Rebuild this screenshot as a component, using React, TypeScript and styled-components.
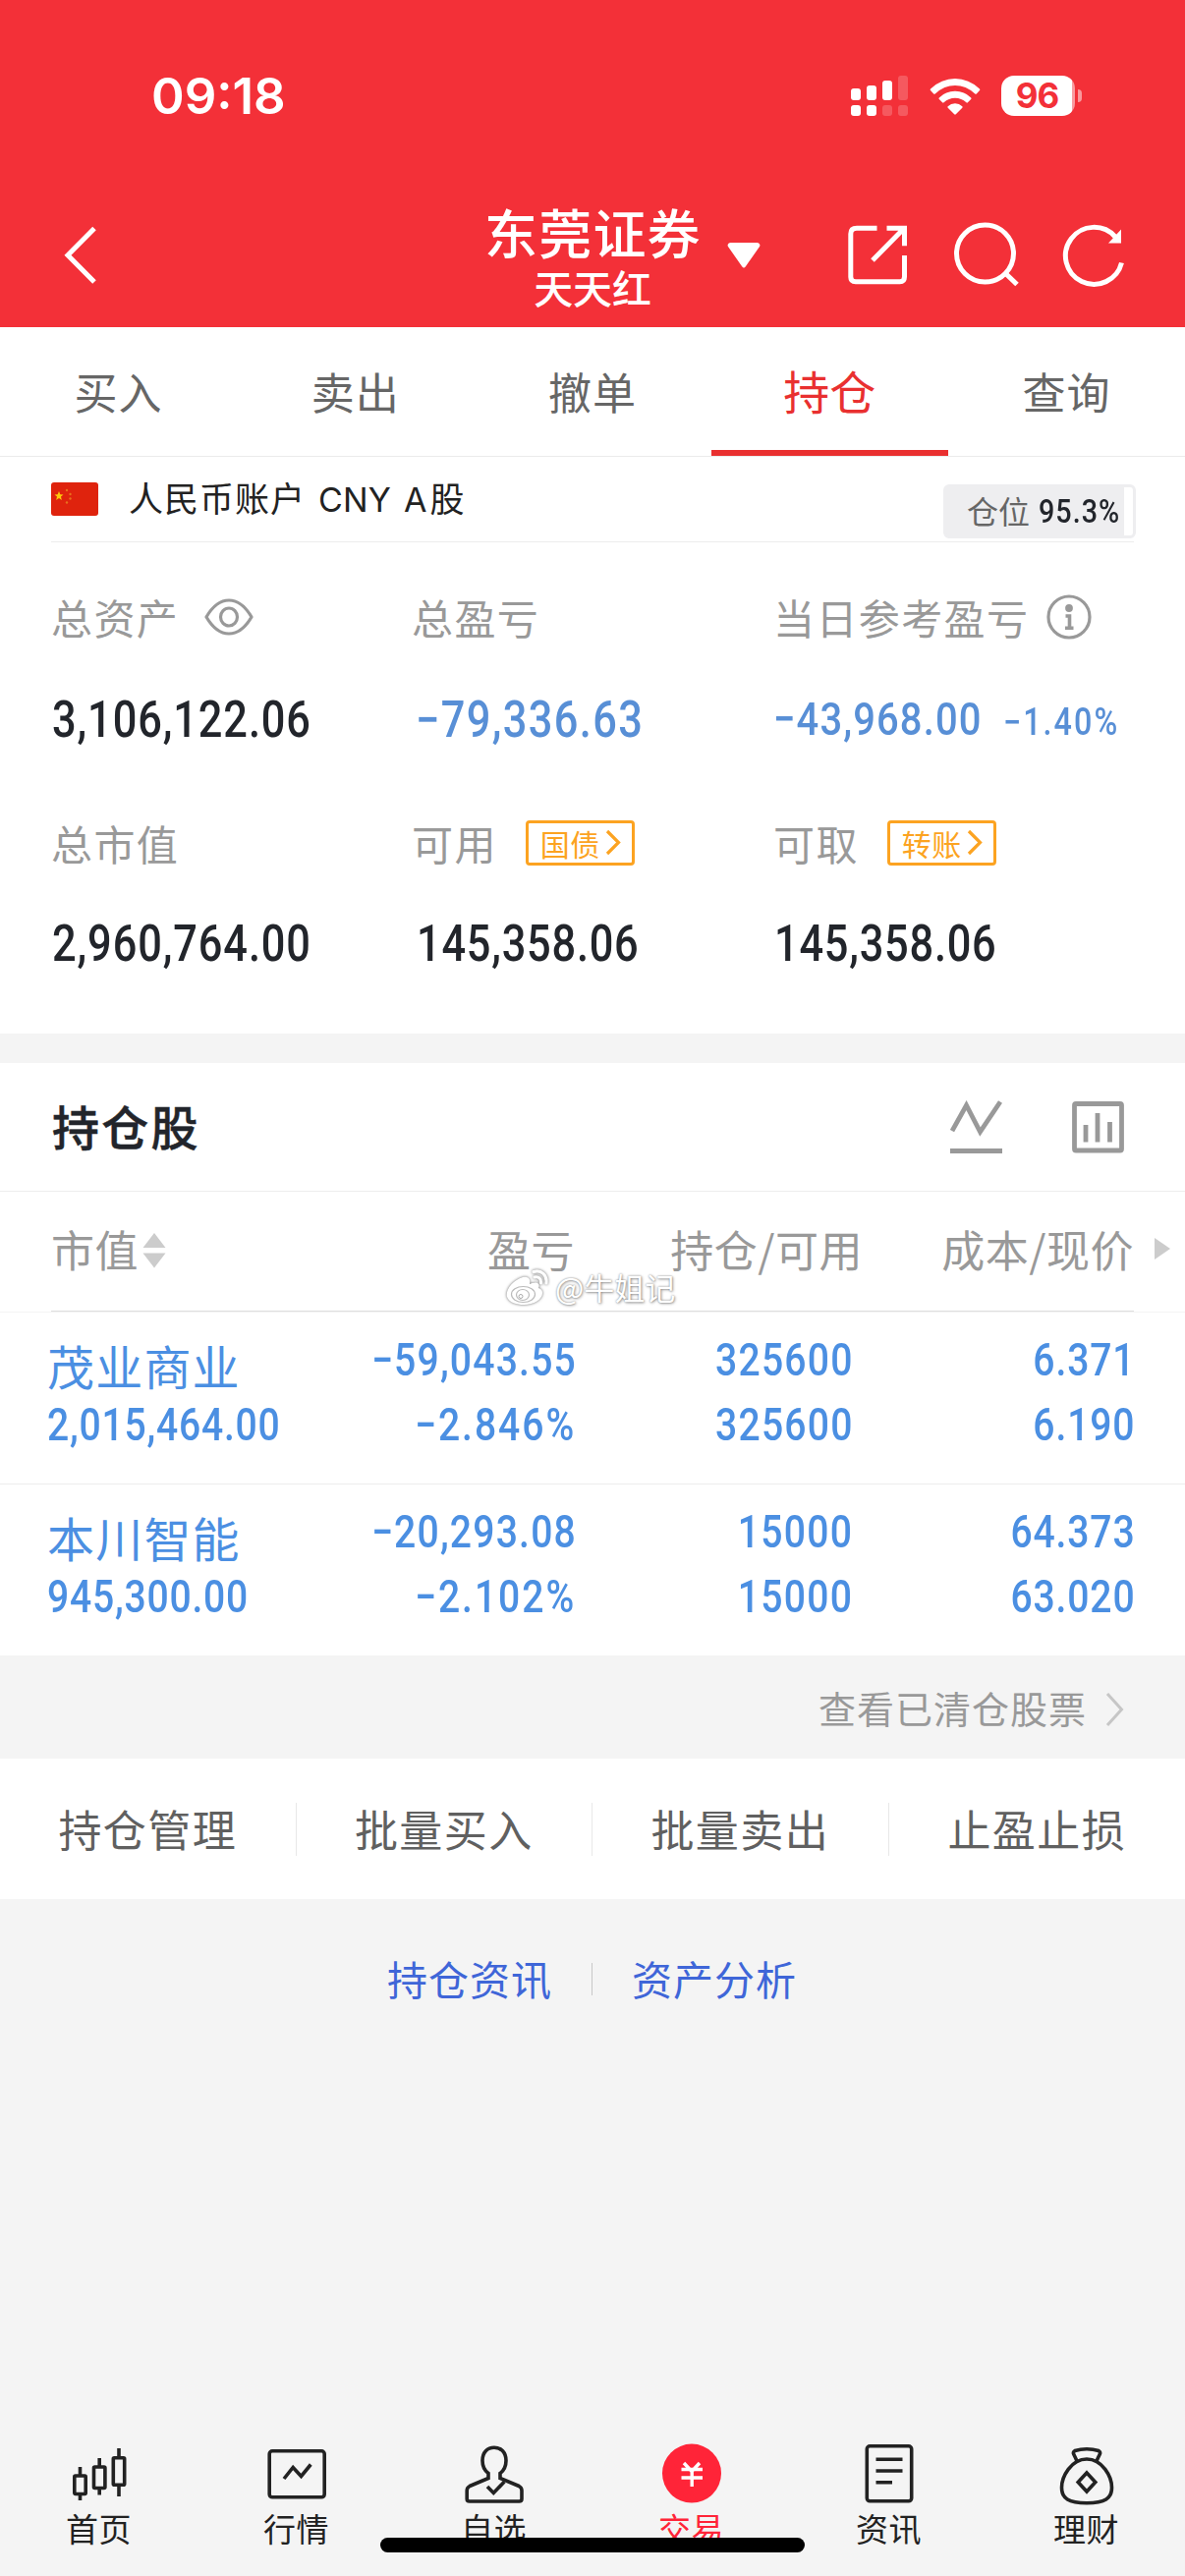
import React from "react";
import styled, { createGlobalStyle } from "styled-components";

const cjk = `"Noto Sans CJK SC", "Noto Sans", sans-serif`;
const blue = "#4b8fe2";

const GlobalStyle = createGlobalStyle`
  * { box-sizing: border-box; }
  body { margin: 0; background: #f4f4f4; font-family: ${cjk}; }
  svg { display: block; flex: none; }
`;

const Screen = styled.div`
  position: relative;
  width: 1206px;
  height: 2622px;
  display: flex;
  flex-direction: column;
  background: #f4f4f4;
  overflow: hidden;
`;

/* ---------- header ---------- */
const Header = styled.header`
  height: 333px;
  flex: none;
  background: #f33038;
  color: #fff;
`;
const StatusBar = styled.div`
  display: flex;
  height: 208px;
  padding: 68px 105px 0 154px;
  align-items: flex-start;
  justify-content: space-between;
`;
const Clock = styled.span`
  font: 600 51px/60px Inter, sans-serif;
  letter-spacing: 0;
`;
const StatusIcons = styled.div`
  display: flex;
  align-items: center;
  height: 41px;
  margin-top: 9px;
`;
const Battery = styled.div`
  width: 75px;
  height: 41px;
  margin-left: 21px;
  border-radius: 13px;
  background: linear-gradient(90deg, #fff 72px, #f99ba0 72px);
  color: #f33038;
  font: 700 35px/41px Inter, sans-serif;
  letter-spacing: -1px;
  padding-right: 2px;
  text-align: center;
`;
const BatteryNub = styled.div`
  width: 4px;
  height: 13px;
  margin-left: 3px;
  border-radius: 0 4px 4px 0;
  background: #f9989c;
`;
const NavBar = styled.div`
  display: grid;
  grid-template-columns: 493px 220px 493px;
  height: 125px;
`;
const NavLeft = styled.div`
  padding: 22px 0 0 64px;
`;
const NavTitle = styled.div`
  text-align: center;
  white-space: nowrap;
  margin-top: -2px;
`;
const Title = styled.div`
  font-size: 54px;
  font-weight: 500;
  line-height: 60px;
  letter-spacing: 1.2px;
`;
const Subtitle = styled.div`
  font-size: 40px;
  line-height: 44px;
  margin-top: 4px;
  font-weight: 500;
  letter-spacing: -0.2px;
`;
const NavRight = styled.div`
  display: flex;
  align-items: flex-start;
  padding: 16px 37px 0 27px;
`;
const Caret = styled.div`
  padding-top: 22px;
  margin-right: auto;
`;
const NavButton = styled.div`
  width: 110.3px;
  display: flex;
  justify-content: center;
`;

/* ---------- tabs ---------- */
const Tabs = styled.nav`
  display: grid;
  grid-template-columns: repeat(5, 1fr);
  height: 132px;
  flex: none;
  background: #fff;
  border-bottom: 1px solid #ebebeb;
`;
const Tab = styled.div<{ $active?: boolean }>`
  padding-top: ${(p) => (p.$active ? 33 : 34)}px;
  text-align: center;
  font-size: ${(p) => (p.$active ? 47 : 44)}px;
  line-height: 62px;
  letter-spacing: ${(p) => (p.$active ? 0 : 1)}px;
  color: ${(p) => (p.$active ? "#e93030" : "#666")};
  border-bottom: 6px solid ${(p) => (p.$active ? "#e93030" : "transparent")};
`;

/* ---------- numbers ---------- */
const Num = styled.span<{ $size: number; $weight?: number; $right?: boolean; $color?: string; $sx?: number; $ls?: number }>`
  display: inline-block;
  font-family: Roboto, sans-serif;
  font-size: ${(p) => p.$size}px;
  font-weight: ${(p) => p.$weight ?? 500};
  line-height: 60px;
  letter-spacing: ${(p) => p.$ls ?? 1.05}px;
  color: ${(p) => p.$color ?? "#22252b"};
  white-space: nowrap;
  transform: scaleX(${(p) => p.$sx ?? 0.85});
  transform-origin: ${(p) => (p.$right ? "right" : "left")} center;
`;

/* ---------- account ---------- */
const Panel = styled.section`
  background: #fff;
  flex: none;
`;
const AccountRow = styled.div`
  display: flex;
  height: 87px;
  margin: 0 52px;
  border-bottom: 1px solid #ededed;
`;
const AccountName = styled.div`
  margin: 15px auto 0 31px;
  font-size: 35px;
  line-height: 52px;
  letter-spacing: 1px;
  color: #222;
  white-space: nowrap;
`;
const Latin = styled.span`
  font-family: Inter, sans-serif;
  font-size: 34px;
  letter-spacing: 0.2px;
  margin: 0 3px 0 13px;
  word-spacing: 3px;
`;
const FlagBox = styled.div`
  padding-top: 26px;
`;
const PositionBadge = styled.div`
  display: flex;
  width: 196px;
  height: 55px;
  margin: 28px -2px 0 0;
  border-radius: 6px;
  border: 3px solid #eeeef0;
  background: linear-gradient(90deg, #eeeef0 181px, #fff 181px);
  padding-left: 21px;
  font-size: 32px;
  line-height: 46px;
  color: #666;
  white-space: nowrap;
`;
const BadgeNum = styled.span`
  margin-left: 9px;
  height: 50px;
  margin-top: -5px;
`;
const Summary = styled.div`
  display: grid;
  grid-template-columns: 367px 368px 1fr;
  grid-template-rows: 230px 270px;
  padding-left: 52px;
  height: 500px;
`;
const Cell = styled.div`
  padding-top: 44px;
`;
const CellLabel = styled.div`
  display: flex;
  align-items: center;
  height: 62px;
  font-size: 42px;
  letter-spacing: 1.4px;
  color: #999;
`;
const LabelIcon = styled.span<{ $gap: number }>`
  margin-left: ${(p) => p.$gap}px;
  padding-top: 2px;
`;
const CellValue = styled.div<{ $top?: number; $left?: number }>`
  display: flex;
  margin-top: ${(p) => p.$top ?? 45}px;
  margin-left: ${(p) => p.$left ?? 1}px;
  height: 60px;
`;
const Link = styled.span`
  display: flex;
  align-items: center;
  width: 111px;
  height: 46px;
  margin: 1px 0 0 29px;
  padding-left: 12px;
  gap: 5px;
  border: 3px solid #fca321;
  border-radius: 4px;
  color: #fca321;
  font-size: 30px;
  line-height: 36px;
  letter-spacing: 0.5px;
`;
const PercentSlot = styled.span`
  margin-left: -16px;
  padding-top: 3px;
`;

/* ---------- holdings ---------- */
const Holdings = styled.section`
  margin-top: 30px;
  background: #fff;
  flex: none;
`;
const HoldHead = styled.div`
  display: flex;
  align-items: center;
  height: 131px;
  padding: 0 62px 0 53px;
  border-bottom: 1px solid #ededed;
`;
const HoldTitle = styled.h2`
  margin: -4px 0 0;
  font-size: 48px;
  letter-spacing: 2.2px;
  font-weight: 500;
  color: #22252b;
  -webkit-text-stroke: 0.5px #22252b;
`;
const HeadIcons = styled.div`
  display: flex;
  gap: 71px;
  margin-left: auto;
`;
const columns = "297px 236px 282px 287px";
const ColumnHead = styled.div`
  position: relative;
  display: grid;
  grid-template-columns: ${columns};
  align-items: center;
  height: 123px;
  padding: 0 52px 6px;
  border-bottom: 1px solid #f4f4f4;
  background: linear-gradient(#dedede, #dedede) 52px 100% / 1102px 1px no-repeat;
  font-size: 44px;
  letter-spacing: 0.5px;
  color: #999;
`;
const Column = styled.div<{ $right?: boolean; $pull?: number }>`
  display: flex;
  align-items: center;
  white-space: nowrap;
  justify-content: ${(p) => (p.$right ? "flex-end" : "flex-start")};
  margin-right: ${(p) => -(p.$pull ?? 0)}px;
`;
const SortIcon = styled.span`
  margin-left: 4px;
  padding-top: 3px;
`;
const MoreArrow = styled.span`
  position: absolute;
  right: 15px;
  top: 46px;
`;
const StockRow = styled.div`
  display: grid;
  grid-template-columns: ${columns};
  height: 175px;
  padding: 0 52px;
  border-bottom: 1px solid #ededed;
  &:last-child { border-bottom: 0; height: 174px; }
`;
const StockCell = styled.div<{ $right?: boolean }>`
  display: flex;
  flex-direction: column;
  align-items: ${(p) => (p.$right ? "flex-end" : "flex-start")};
  padding-top: 18px;
  gap: 6px;
  margin: ${(p) => (p.$right ? "0 -1.5px 0 0" : "0 0 0 -4px")};
`;
const StockName = styled.div`
  height: 60px;
  font-size: 48px;
  line-height: 70px;
  letter-spacing: 1.2px;
  white-space: nowrap;
  color: ${blue};
`;
const Watermark = styled.div`
  position: absolute;
  left: 515px;
  top: 1288px;
  display: flex;
  align-items: center;
  gap: 6px;
  color: #fff;
  font-size: 31px;
  line-height: 44px;
  text-shadow: 0 0 2px rgba(0, 0, 0, 0.45), 1px 1px 3px rgba(0, 0, 0, 0.35);
  svg { filter: drop-shadow(0 0 1.5px rgba(0, 0, 0, 0.6)); }
`;

/* ---------- below the table ---------- */
const Cleared = styled.div`
  display: flex;
  align-items: center;
  justify-content: flex-end;
  height: 105px;
  padding: 0 62px 0 0;
  gap: 19px;
  flex: none;
  font-size: 38px;
  letter-spacing: 1px;
  color: #999;
  svg { margin-top: 4px; }
`;
const Actions = styled.div`
  display: grid;
  grid-template-columns: repeat(4, 1fr);
  align-items: center;
  height: 143px;
  flex: none;
  background: #fff;
`;
const Action = styled.div`
  height: 54px;
  border-right: 1px solid #e8e8e8;
  text-align: center;
  font-size: 44px;
  line-height: 52px;
  letter-spacing: 1.4px;
  color: #606060;
  &:last-child { border-right: 0; }
`;
const Links = styled.div`
  display: grid;
  grid-template-columns: 1fr 1fr;
  flex: 1;
  align-items: start;
  padding-top: 65px;
`;
const TextLink = styled.a<{ $first?: boolean }>`
  height: 33px;
  padding: 0 40px;
  text-align: ${(p) => (p.$first ? "right" : "left")};
  border-right: ${(p) => (p.$first ? "1px solid #c8c8c8" : "0")};
  font-size: 41px;
  line-height: 31px;
  letter-spacing: 1px;
  color: #3f66d8;
`;

/* ---------- bottom bar ---------- */
const BottomBar = styled.nav`
  display: grid;
  grid-template-columns: repeat(6, 1fr);
  height: 142px;
  flex: none;
`;
const BottomItem = styled.div<{ $active?: boolean }>`
  display: flex;
  flex-direction: column;
  align-items: center;
  font-size: 33px;
  line-height: 44px;
  letter-spacing: 0.4px;
  color: ${(p) => (p.$active ? "#ff2438" : "#222")};
`;
const ItemIcon = styled.div`
  height: 69px;
  margin-bottom: 2px;
`;
const HomeIndicator = styled.div`
  position: absolute;
  left: 387px;
  top: 2583px;
  width: 432px;
  height: 15px;
  border-radius: 8px;
  background: #000;
`;

/* ---------- drawings ---------- */
const Signal = () => (
  <svg width="58" height="41" viewBox="0 0 58 41" fill="#fff">
    <rect x="0" y="13" width="10" height="12" rx="3" />
    <rect x="16" y="10" width="10" height="15" rx="3" />
    <rect x="32" y="5" width="10" height="20" rx="3" />
    <rect x="48" y="0" width="10" height="25" rx="3" opacity=".2" />
    <rect x="0" y="30" width="10" height="11" rx="3" />
    <rect x="16" y="30" width="10" height="11" rx="3" />
    <rect x="32" y="30" width="10" height="11" rx="3" opacity=".2" />
    <rect x="48" y="30" width="10" height="11" rx="3" opacity=".2" />
  </svg>
);
const WifiBox = styled.svg`
  margin-left: 22px;
`;
const Wifi = () => (
  <WifiBox width="52" height="38" viewBox="0 0 52 38" fill="#fff">
    <path d="M1 11.5Q12 1 26 1t25 10.500q.8.8 0 1.600l-3.200 3.300q-.7.700-1.500 0Q37 8 26 8T5.700 16.400q-.8.700-1.500 0L1 13.100q-.8-.8 0-1.600z" />
    <path d="M9.800 20.400Q16.500 13.800 26 13.800t16.200 6.600q.8.800 0 1.600l-3.300 3.300q-.8.700-1.500 0Q32.500 20.700 26 20.700t-11.400 4.600q-.7.700-1.500 0L9.800 22q-.8-.8 0-1.600z" />
    <path d="M18.700 29.200Q21.800 26.300 26 26.300t7.300 2.900q.8.800 0 1.600l-6.500 6.500q-.8.700-1.600 0l-6.500-6.500q-.8-.8 0-1.600z" />
  </WifiBox>
);
const BackIcon = () => (
  <svg width="38" height="60" viewBox="0 0 38 60" fill="none" stroke="#fff" strokeWidth="5">
    <path d="M32 2.500 5 29.700 32 57" />
  </svg>
);
const CaretIcon = () => (
  <svg width="34" height="28" viewBox="0 0 34 28" fill="#fff">
    <path d="M3 1h28q3.500 1 2 4L19 25q-2 3-4 0L1 5q-1.500-3 2-4z" />
  </svg>
);
const ShareIcon = () => (
  <svg width="70" height="70" viewBox="0 0 70 70" fill="none" stroke="#fff" strokeWidth="5">
    <path d="M34.500 8.300H14Q7.800 8.300 7.800 14v44q0 4.700 5 4.700h45q4.700 0 4.700-5V36" />
    <path d="M44.500 8.300h18v18M62 8.500 30 41" />
  </svg>
);
const SearchIcon = () => (
  <svg width="70" height="70" viewBox="0 0 70 70" fill="none" stroke="#fff" strokeWidth="5">
    <circle cx="33.500" cy="34" r="29" />
    <path d="M54 54 66 65.500" />
  </svg>
);
const RefreshIcon = () => (
  <svg width="70" height="70" viewBox="0 0 70 70" fill="none" stroke="#fff" strokeWidth="5">
    <path d="M62.500 43.500A29 29 0 1 1 56 17" />
    <path d="M62 9.500v14H49z" fill="#fff" stroke="none" />
  </svg>
);
const Flag = () => (
  <svg width="48" height="34" viewBox="0 0 48 34">
    <rect width="48" height="34" rx="3" fill="#df230d" />
    <path d="m8 9 1.300 3.200 3.200.2-2.500 2.200.8 3.300L8 16.100 5.200 17.900l.8-3.300-2.500-2.200 3.200-.2z" fill="#fdc80b" />
    <g fill="#e8701d">
      <circle cx="16" cy="8" r="1.200" />
      <circle cx="19.500" cy="12" r="1.200" />
      <circle cx="19.500" cy="16.500" r="1.200" />
      <circle cx="16" cy="20.500" r="1.200" />
    </g>
  </svg>
);
const EyeIcon = () => (
  <svg width="50" height="38" viewBox="0 0 50 38" fill="none" stroke="#999" strokeWidth="3.200">
    <path d="M2 19Q12 2 25 2t23 17Q38 36 25 36T2 19z" strokeLinejoin="round" />
    <ellipse cx="25" cy="19" rx="8.500" ry="9" />
  </svg>
);
const InfoIcon = () => (
  <svg width="46" height="46" viewBox="0 0 46 46" fill="none" stroke="#999" strokeWidth="3.200">
    <circle cx="23" cy="23" r="21" />
    <circle cx="23" cy="14" r="3.900" fill="#999" stroke="none" />
    <path d="M19.500 22H23.500V34M19 34.200h8.500" strokeWidth="3.600" />
  </svg>
);
const LinkChevron = () => (
  <svg width="16" height="27" viewBox="0 0 16 27" fill="none" stroke="#fca321" strokeWidth="3.200">
    <path d="m2 2 11.500 11.500L2 25" />
  </svg>
);
const TrendIcon = () => (
  <svg width="53" height="54" viewBox="0 0 53 54" fill="none" stroke="#999" strokeWidth="4.800">
    <path d="M2 31 16.500 5l14 27L51 1.500M0 51.500h53" />
  </svg>
);
const BarsIcon = () => (
  <svg width="53" height="54" viewBox="0 0 53 54" fill="none" stroke="#999" strokeWidth="4.800">
    <rect x="2.500" y="3.500" width="48" height="47.500" rx="1.500" />
    <path d="M14 25v17.500M26 13v29.500M38.500 22v20.500" />
  </svg>
);
const SortArrows = () => (
  <svg width="24" height="38" viewBox="0 0 24 38" fill="#ccc">
    <path d="M12 1 23.500 16H.5zM.5 21.500h23L12 36.500z" />
  </svg>
);
const WeiboIcon = () => (
  <svg width="44" height="38" viewBox="0 0 44 38" fill="none">
    <path d="M17 9C7 12-1 22 1 29c2 6 10 8 17 8 11 0 20-6 19-13-.4-2.500-2.500-3.500-4-4 .9-2.500.8-4-1-5-2.500-1-6 .2-8 1 .8-3.500.4-8-7-7z" fill="#fff" />
    <ellipse cx="17.500" cy="26.500" rx="12" ry="8" stroke="#bbb" strokeWidth="1.200" />
    <ellipse cx="17" cy="27" rx="6.500" ry="5.500" stroke="#bbb" strokeWidth="1.200" />
    <circle cx="15" cy="28.500" r="2" stroke="#aaa" />
    <path d="M28 3.500C36 1 42 7 41 15M29 9c4-1 7 1.500 6.500 6" stroke="#fff" strokeWidth="3" strokeLinecap="round" />
  </svg>
);
const CandlesIcon = () => (
  <svg width="60" height="68" viewBox="0 0 60 68" fill="none" stroke="#222" strokeWidth="3.600">
    <rect x="4.800" y="40" width="11.400" height="18.500" rx="1" />
    <path d="M10.500 31v9M10.500 58.500V65" />
    <rect x="24.500" y="31" width="11.400" height="21.500" rx="1" />
    <path d="M30.200 22v9M30.200 52.500V59.500" />
    <rect x="44.300" y="21.800" width="11.400" height="27.500" rx="1" />
    <path d="M50 12v9.800M50 49.300V61" />
  </svg>
);
const QuoteIcon = () => (
  <svg width="60" height="68" viewBox="0 0 60 68" fill="none" stroke="#222" strokeWidth="3.600">
    <rect x="2.200" y="14.800" width="56" height="47" rx="3" />
    <path d="m17 43 9.200-11.500 8.300 9 9.800-12" />
  </svg>
);
const PersonIcon = () => (
  <svg width="60" height="68" viewBox="0 0 60 68" fill="none" stroke="#222" strokeWidth="3.600">
    <path d="M24 37.500v5L5 50.500Q2.200 52 2.200 55v8.500q0 2.500 2.600 2.500h50.600q2.600 0 2.600-2.500V55q0-3-2.800-4.500L36 42.500v-5c4-3 6-8 6-13C42 16 37 11.300 30 11.300S18 16 18 24.500c0 5 2 10 6 13z" />
    <path d="m23 51 6.300 6.500 11-11.500" />
  </svg>
);
const YuanIcon = () => (
  <svg width="60" height="68" viewBox="0 0 60 68" fill="none">
    <circle cx="30" cy="37.600" r="30" fill="#ff2438" />
    <path d="m22 27 8 8.500 8-8.500M19.500 33.500h21.500M19.500 42h21.500M30.200 35v16" stroke="#fff" strokeWidth="3.400" />
  </svg>
);
const NewsIcon = () => (
  <svg width="60" height="68" viewBox="0 0 60 68" fill="none" stroke="#222" strokeWidth="3.600">
    <rect x="7.300" y="9.800" width="45.400" height="56" rx="3" />
    <path d="M16.500 23.300H43.500M16.500 35H43.500M16.500 46.800h16.500" />
  </svg>
);
const BagIcon = () => (
  <svg width="60" height="70" viewBox="0 0 60 70" fill="none" stroke="#222" strokeWidth="3.600">
    <path d="M20 25q-2-4.500-3.300-7-1-2 1.300-3.500 5.500-1.700 12-1.700t12 1.700q2.300 1.500 1.300 3.500-1.300 2.500-3.300 7" />
    <path d="M30 23C14 23 4.500 41 4.500 52c0 11 7 15.700 25.500 15.700S55.500 63 55.500 52C55.500 41 46 23 30 23z" />
    <path d="m30 37 8.800 9.500L30 56l-8.800-9.500z" />
  </svg>
);

/* ---------- data ---------- */
const stocks = [
  { name: "茂业商业", value: "2,015,464.00", pl: ["−59,043.55", "−2.846%"], qty: ["325600", "325600"], price: ["6.371", "6.190"] },
  { name: "本川智能", value: "945,300.00", pl: ["−20,293.08", "−2.102%"], qty: ["15000", "15000"], price: ["64.373", "63.020"] },
];
const bottomItems = [
  { label: "首页", Icon: CandlesIcon },
  { label: "行情", Icon: QuoteIcon },
  { label: "自选", Icon: PersonIcon },
  { label: "交易", Icon: YuanIcon, active: true },
  { label: "资讯", Icon: NewsIcon },
  { label: "理财", Icon: BagIcon },
];

const tracking = (v: string) => {
  if (v.includes("%")) return 2.3;
  if (v.includes(",")) return 1.4;
  return v.includes(".") ? 1 : 1.5;
};

const Pair = ({ values }: { values: string[] }) => (
  <StockCell $right>
    {values.map((v, i) => (
      <Num key={i} $size={46} $color={blue} $ls={tracking(v)} $right>{v}</Num>
    ))}
  </StockCell>
);

export default function App() {
  return (
    <Screen>
      <GlobalStyle />
      <Header>
        <StatusBar>
          <Clock>09:18</Clock>
          <StatusIcons>
            <Signal />
            <Wifi />
            <Battery>96</Battery>
            <BatteryNub />
          </StatusIcons>
        </StatusBar>
        <NavBar>
          <NavLeft><BackIcon /></NavLeft>
          <NavTitle>
            <Title>东莞证券</Title>
            <Subtitle>天天红</Subtitle>
          </NavTitle>
          <NavRight>
            <Caret><CaretIcon /></Caret>
            <NavButton><ShareIcon /></NavButton>
            <NavButton><SearchIcon /></NavButton>
            <NavButton><RefreshIcon /></NavButton>
          </NavRight>
        </NavBar>
      </Header>

      <Tabs>
        {["买入", "卖出", "撤单", "持仓", "查询"].map((t) => (
          <Tab key={t} $active={t === "持仓"}>{t}</Tab>
        ))}
      </Tabs>

      <Panel>
        <AccountRow>
          <FlagBox><Flag /></FlagBox>
          <AccountName>人民币账户<Latin>CNY A</Latin>股</AccountName>
          <PositionBadge>
            仓位
            <BadgeNum><Num $size={33} $ls={1.2} $sx={0.87}>95.3%</Num></BadgeNum>
          </PositionBadge>
        </AccountRow>
        <Summary>
          <Cell>
            <CellLabel>总资产<LabelIcon $gap={26}><EyeIcon /></LabelIcon></CellLabel>
            <CellValue><Num $size={51}>3,106,122.06</Num></CellValue>
          </Cell>
          <Cell>
            <CellLabel>总盈亏</CellLabel>
            <CellValue $left={4}><Num $size={51} $color="#588fd6" $ls={1.6}>−79,336.63</Num></CellValue>
          </Cell>
          <Cell>
            <CellLabel>当日参考盈亏<LabelIcon $gap={18}><InfoIcon /></LabelIcon></CellLabel>
            <CellValue $top={44} $left={0}>
              <Num $size={47} $color="#588fd6" $ls={1.3}>−43,968.00</Num>
              <PercentSlot><Num $size={38} $color="#588fd6" $ls={2.4}>−1.40%</Num></PercentSlot>
            </CellValue>
          </Cell>
          <Cell>
            <CellLabel>总市值</CellLabel>
            <CellValue $top={43}><Num $size={51}>2,960,764.00</Num></CellValue>
          </Cell>
          <Cell>
            <CellLabel>可用<Link>国债<LinkChevron /></Link></CellLabel>
            <CellValue $top={43} $left={5}><Num $size={51} $ls={0.9}>145,358.06</Num></CellValue>
          </Cell>
          <Cell>
            <CellLabel>可取<Link>转账<LinkChevron /></Link></CellLabel>
            <CellValue $top={43} $left={1}><Num $size={51} $ls={0.9}>145,358.06</Num></CellValue>
          </Cell>
        </Summary>
      </Panel>

      <Holdings>
        <HoldHead>
          <HoldTitle>持仓股</HoldTitle>
          <HeadIcons><TrendIcon /><BarsIcon /></HeadIcons>
        </HoldHead>
        <ColumnHead>
          <Column>市值<SortIcon><SortArrows /></SortIcon></Column>
          <Column $right>盈亏</Column>
          <Column $right $pull={11}>持仓/可用</Column>
          <Column $right>成本/现价</Column>
          <MoreArrow>
            <svg width="16" height="24" viewBox="0 0 16 24" fill="#ccc"><path d="M0 1v22l16-11z" /></svg>
          </MoreArrow>
        </ColumnHead>
        <div>
          {stocks.map((s) => (
            <StockRow key={s.name}>
              <StockCell>
                <StockName>{s.name}</StockName>
                <Num $size={46} $color={blue} $ls={0.9}>{s.value}</Num>
              </StockCell>
              <Pair values={s.pl} />
              <Pair values={s.qty} />
              <Pair values={s.price} />
            </StockRow>
          ))}
        </div>
      </Holdings>

      <Cleared>
        查看已清仓股票
        <svg width="19" height="36" viewBox="0 0 19 36" fill="none" stroke="#c6c6c6" strokeWidth="3">
          <path d="m2 2 14.500 16L2 34" />
        </svg>
      </Cleared>
      <Actions>
        {["持仓管理", "批量买入", "批量卖出", "止盈止损"].map((a) => (
          <Action key={a}>{a}</Action>
        ))}
      </Actions>
      <Links>
        <TextLink $first>持仓资讯</TextLink>
        <TextLink>资产分析</TextLink>
      </Links>

      <BottomBar>
        {bottomItems.map(({ label, Icon, active }) => (
          <BottomItem key={label} $active={active}>
            <ItemIcon><Icon /></ItemIcon>
            {label}
          </BottomItem>
        ))}
      </BottomBar>
      <HomeIndicator />
      <Watermark><WeiboIcon />@牛姐记</Watermark>
    </Screen>
  );
}
